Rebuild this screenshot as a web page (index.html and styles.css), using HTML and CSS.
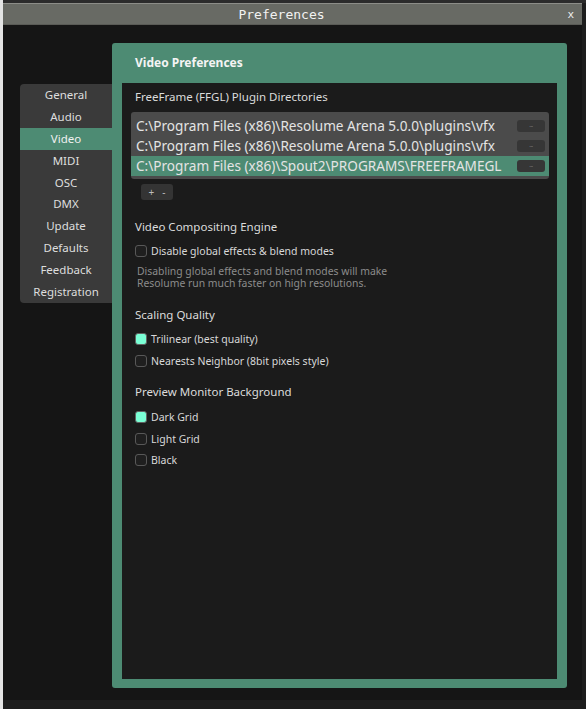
FILE: index.html
```html
<!DOCTYPE html>
<html>
<head>
<meta charset="utf-8">
<link rel="stylesheet" href="styles.css">
</head>
<body>
<div class="backdrop">
  <div class="window">
    <div class="titlebar">
      <span></span>
      <span class="title">Preferences</span>
      <span class="close">x</span>
    </div>
    <div class="wbody">
      <div class="sidebar">
        <div class="nav">General</div>
        <div class="nav">Audio</div>
        <div class="nav active">Video</div>
        <div class="nav">MIDI</div>
        <div class="nav">OSC</div>
        <div class="nav">DMX</div>
        <div class="nav">Update</div>
        <div class="nav">Defaults</div>
        <div class="nav">Feedback</div>
        <div class="nav">Registration</div>
      </div>
      <div class="panel">
        <div class="panel-head">Video Preferences</div>
        <div class="inner">
          <div class="h">FreeFrame (FFGL) Plugin Directories</div>
          <div class="list">
            <div class="row"><span class="path">C:\Program Files (x86)\Resolume Arena 5.0.0\plugins\vfx</span><span class="dots">...</span></div>
            <div class="row"><span class="path">C:\Program Files (x86)\Resolume Arena 5.0.0\plugins\vfx</span><span class="dots">...</span></div>
            <div class="row sel"><span class="path">C:\Program Files (x86)\Spout2\PROGRAMS\FREEFRAMEGL</span><span class="dots">...</span></div>
          </div>
          <div class="addrem"><span>+</span><span>-</span></div>

          <div class="h h1">Video Compositing Engine</div>
          <div class="opt first"><span class="cb"></span><span>Disable global effects &amp; blend modes</span></div>
          <div class="desc">
            <div>Disabling global effects and blend modes will make</div>
            <div>Resolume run much faster on high resolutions.</div>
          </div>

          <div class="h h2">Scaling Quality</div>
          <div class="opt first"><span class="cb on"></span><span>Trilinear (best quality)</span></div>
          <div class="opt"><span class="cb"></span><span>Nearests Neighbor (8bit pixels style)</span></div>

          <div class="h h3">Preview Monitor Background</div>
          <div class="opt first2"><span class="cb on"></span><span>Dark Grid</span></div>
          <div class="opt tight"><span class="cb"></span><span>Light Grid</span></div>
          <div class="opt tight"><span class="cb"></span><span>Black</span></div>
        </div>
      </div>
    </div>
  </div>
</div>
</body>
</html>
```

FILE: styles.css
```css
html, body {
  margin: 0;
  padding: 0;
}
body {
  width: 586px;
  height: 709px;
  overflow: hidden;
  background: linear-gradient(to right, #e4e4e4 0, #e4e4e4 3px, #1d1d1d 3px);
  font-family: "Noto Sans", "DejaVu Sans", sans-serif;
  color: #dcdcdc;
}
.backdrop {
  height: 709px;
  padding: 3px 4px 0 3px;
  box-sizing: border-box;
  background:
    linear-gradient(to right, transparent 0, transparent 3px, #2b2b2b 3px);
  background-size: 100% 3px;
  background-repeat: no-repeat;
}
.window {
  width: 579px;
  height: 697px;
  background: #151515;
  display: flex;
  flex-direction: column;
}
.titlebar {
  height: 22px;
  box-sizing: border-box;
  background: #686a64;
  border-top: 1px solid #8c8d88;
  border-bottom: 1px solid #5a5b56;
  display: grid;
  grid-template-columns: 1fr auto 1fr;
  align-items: center;
}
.title {
  margin-right: 22px;
  font-family: "DejaVu Sans Mono", monospace;
  font-size: 13px;
  color: #f2f2f2;
}
.close {
  justify-self: end;
  margin-right: 8px;
  font-family: "DejaVu Sans Mono", monospace;
  font-size: 11px;
  color: #f0f0f0;
}
.wbody {
  flex: 1;
  display: flex;
  padding: 18px 15px 12px 17px;
  min-height: 0;
}
.sidebar {
  width: 92px;
  margin-top: 41px;
  align-self: flex-start;
  background: #3a3a3a;
  border-radius: 4px 0 0 4px;
  overflow: hidden;
}
.nav {
  height: 21.9px;
  line-height: 21.9px;
  text-align: center;
  font-size: 11.5px;
  color: #dedede;
}
.nav.active {
  background: #4d8b73;
  color: #f0f0f0;
}
.panel {
  flex: 1;
  display: flex;
  flex-direction: column;
  background: #4d8b73;
  border-radius: 3px;
}
.panel-head {
  height: 40px;
  line-height: 40px;
  padding-left: 23px;
  font-size: 12px;
  font-weight: 700;
  color: #f4f4f4;
}
.inner {
  flex: 1;
  margin: 0 10px 9px 10px;
  background: #1b1b1b;
  padding: 6px 8px 0 13px;
}
.h {
  font-size: 11.5px;
  line-height: 16px;
  color: #dcdcdc;
}
.list {
  margin: 7px 0 0 -4px;
  background: #4b4b4b;
  border-radius: 3px;
  padding: 3.5px 0 3.5px;
}
.row {
  height: 20px;
  display: flex;
  align-items: center;
  justify-content: space-between;
  padding: 0 4px 0 5px;
}
.row.sel {
  background: #4d8b73;
}
.path {
  font-size: 13.6px;
  color: #e4e4e4;
  white-space: nowrap;
}
.dots {
  width: 28px;
  height: 12px;
  background: #363636;
  border-radius: 3px;
  font-size: 6px;
  line-height: 10px;
  letter-spacing: -0.5px;
  text-align: center;
  color: #8a8a8a;
}
.addrem {
  margin: 5px 0 0 6px;
  width: 32px;
  height: 16px;
  background: #343434;
  border-radius: 3px;
  display: flex;
  justify-content: center;
  gap: 8px;
  align-items: center;
  font-size: 10px;
  color: #bdbdbd;
}
.h1 { margin-top: 19px; }
.h2 { margin-top: 18px; }
.h3 { margin-top: 12px; }
.opt {
  height: 22px;
  display: flex;
  align-items: center;
  gap: 4px;
  font-size: 10.5px;
  color: #d8d8d8;
}
.opt.first { margin-top: 5px; }
.opt.first2 { margin-top: 6px; }
.opt.tight { height: 21.5px; }
.cb {
  width: 12px;
  height: 12px;
  box-sizing: border-box;
  border: 1.5px solid #585858;
  border-radius: 3px;
  background: #1f1f1f;
  flex: none;
}
.cb.on {
  background: #7affd5;
  border-color: #626262;
}
.desc {
  margin: 3px 0 0 2px;
  font-size: 10.4px;
  line-height: 12px;
  color: #8c8c8c;
}
.desc div {
  height: 12px;
  white-space: nowrap;
}
```
